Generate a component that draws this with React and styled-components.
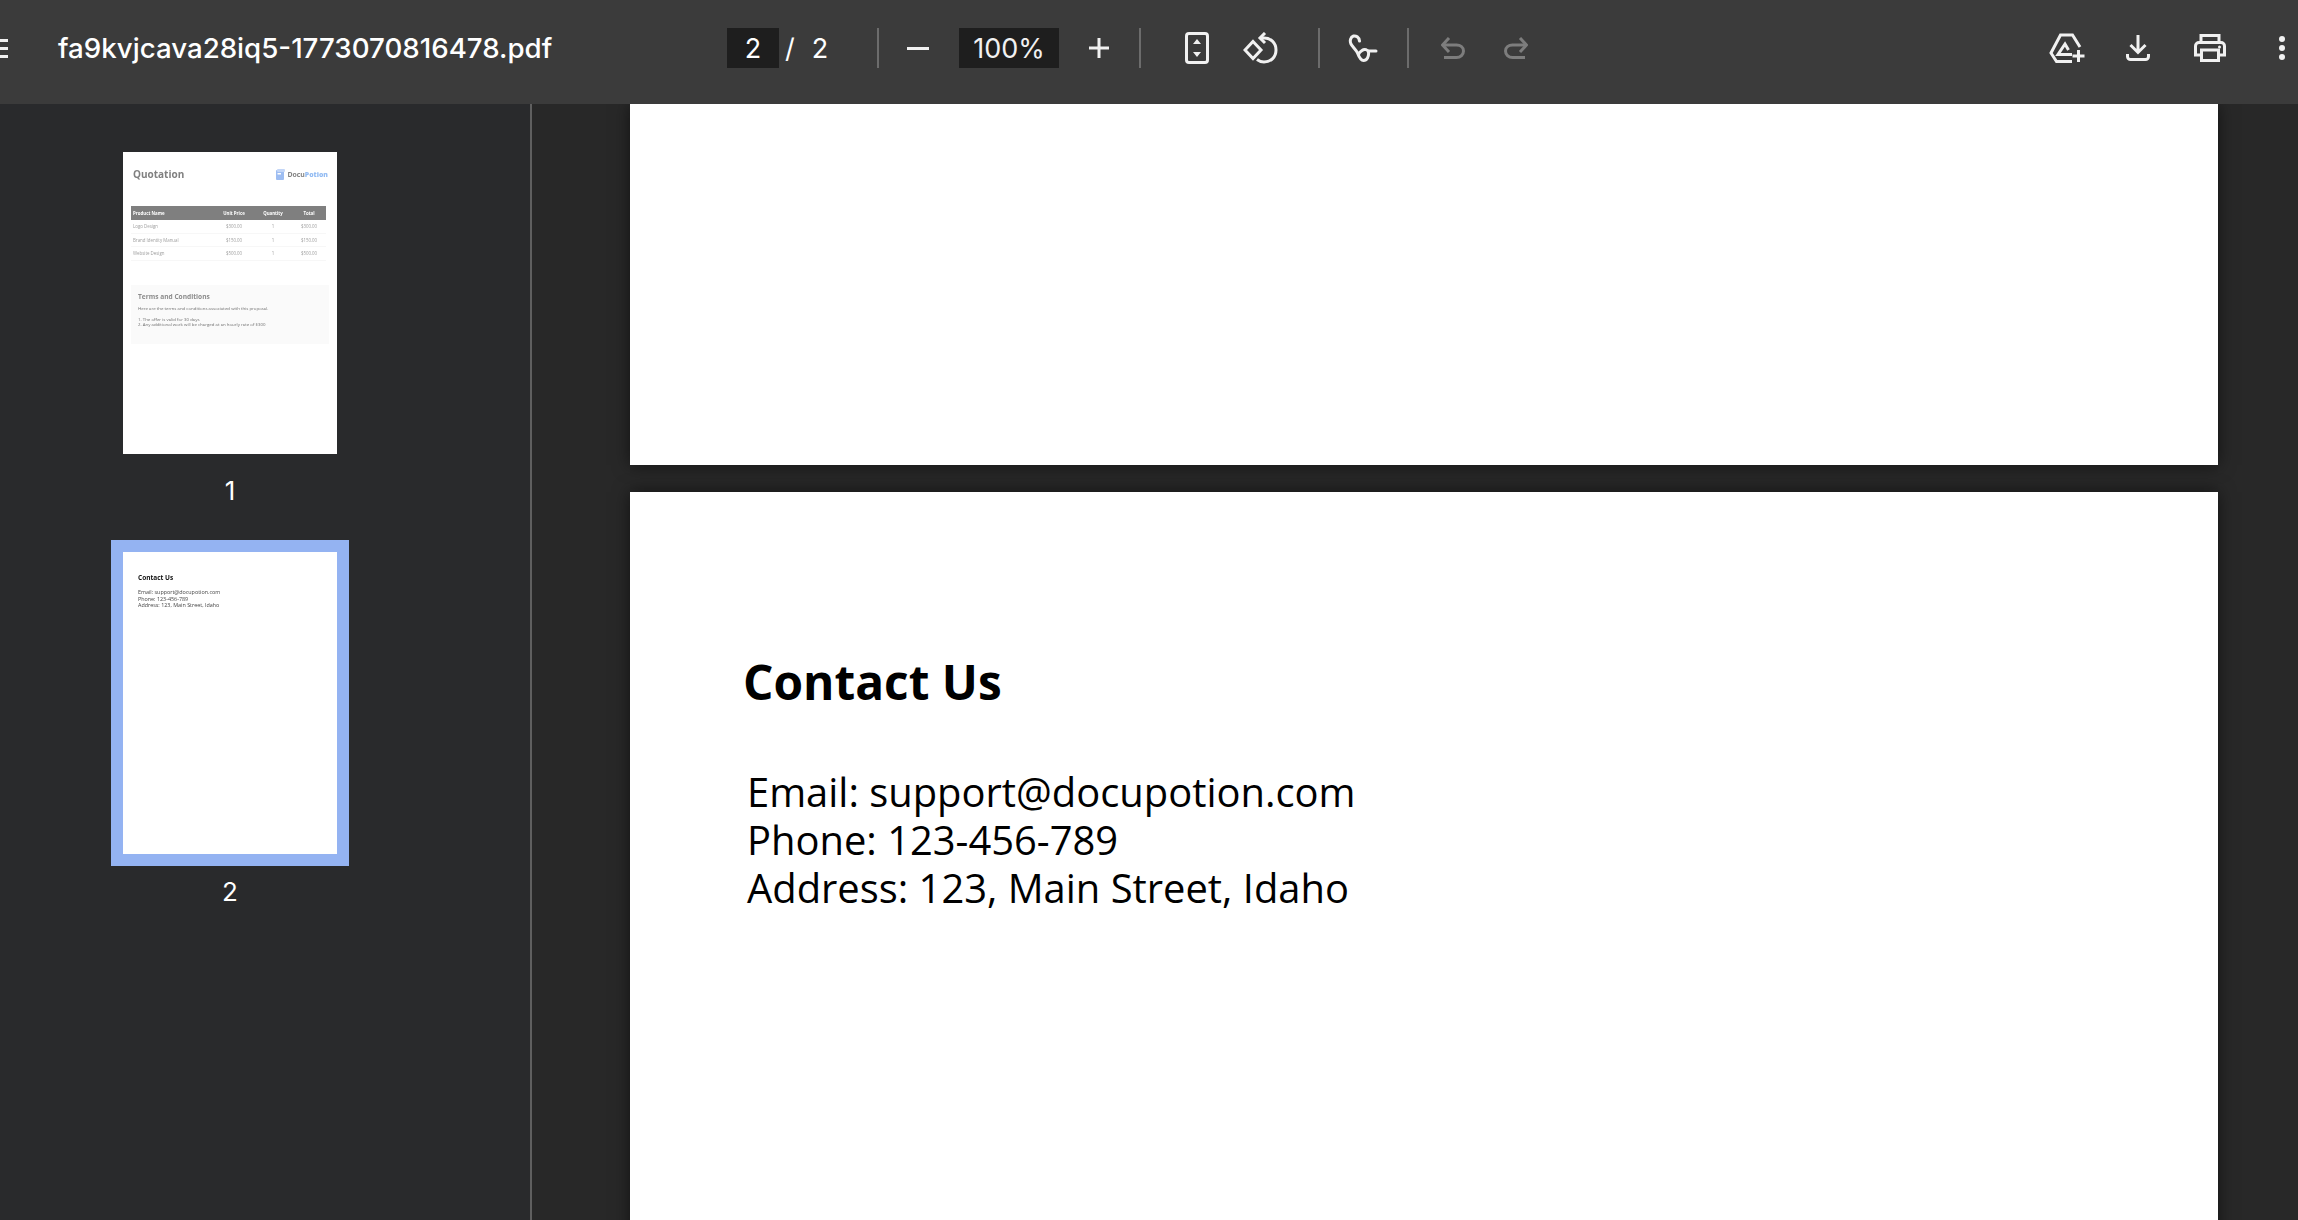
import React from 'react';
import styled, { createGlobalStyle } from 'styled-components';

const GlobalStyle = createGlobalStyle`
  html, body {
    margin: 0;
    height: 100%;
    overflow: hidden;
    background: #282828;
  }
  body {
    font-family: Inter, Roboto, "Liberation Sans", sans-serif;
  }
`;

const Viewer = styled.div`
  width: 2298px;
  height: 1220px;
  display: flex;
  flex-direction: column;
  overflow: hidden;
`;

const Toolbar = styled.header`
  height: 104px;
  flex: none;
  display: flex;
  align-items: center;
  padding-bottom: 8px;
  box-sizing: border-box;
  background: #3b3b3b;
  color: #fff;
  position: relative;
  z-index: 2;
`;

const MenuLines = styled.span`
  width: 8px;
  height: 19px;
  flex: none;
  margin-right: 50px;
  border-top: 3px solid #f1f1f1;
  border-bottom: 3px solid #f1f1f1;
  box-sizing: border-box;
  display: flex;
  align-items: center;
  &::before {
    content: '';
    width: 100%;
    height: 3px;
    background: #f1f1f1;
  }
`;

const Title = styled.div`
  width: 669px;
  flex: none;
  font-size: 27.7px;
  font-weight: 500;
  white-space: nowrap;
`;

const Field = styled.div`
  height: 40px;
  width: ${p => p.$width}px;
  flex: none;
  display: flex;
  align-items: center;
  justify-content: center;
  background: #1e1e1e;
  font-size: 27px;
`;

const PageCount = styled.div`
  width: 98px;
  flex: none;
  display: flex;
  align-items: center;
  font-size: 27px;
  padding-left: 6px;
  box-sizing: border-box;
  gap: 17px;
`;

const Divider = styled.span`
  width: 2px;
  height: 40px;
  flex: none;
  background: #6c6c6c;
  margin-left: ${p => p.$left || 0}px;
`;

const IconSlot = styled.span`
  flex: none;
  display: flex;
  margin-left: ${p => p.$left}px;
  color: ${p => (p.$dim ? '#7d7d7d' : '#f1f1f1')};
  svg {
    display: block;
  }
`;

const Body = styled.div`
  flex: 1;
  display: flex;
  min-height: 0;
`;

const Sidebar = styled.aside`
  width: 532px;
  flex: none;
  display: flex;
  flex-direction: column;
  align-items: center;
  padding-top: 36px;
  padding-right: 70px;
  box-sizing: border-box;
  background: #292a2c;
  border-right: 2px solid #5f5f5f;
`;

const ThumbFrame = styled.div`
  padding: 12px;
  background: ${p => (p.$active ? '#94b3f2' : 'transparent')};
`;

const ThumbPage = styled.div`
  width: 214px;
  height: 302px;
  box-sizing: border-box;
  background: #fff;
  font-family: "Open Sans", sans-serif;
  filter: blur(0.35px);
`;

const ThumbLabel = styled.div`
  color: #fff;
  font-size: 26px;
  line-height: 30px;
  margin-top: ${p => p.$top}px;
  margin-bottom: ${p => p.$bottom || 0}px;
  text-align: center;
`;

const QuoteHead = styled.div`
  display: flex;
  align-items: center;
  justify-content: space-between;
  padding: 2px 9px 0 10px;
  height: 42px;
  box-sizing: border-box;
`;

const QuoteTitle = styled.div`
  font-size: 10px;
  font-weight: 700;
  color: #808080;
`;

const Brand = styled.div`
  display: flex;
  align-items: center;
  gap: 2px;
  font-size: 6.9px;
  font-weight: 700;
  color: #808080;
  b {
    color: #93bcf3;
  }
`;

const Table = styled.div`
  margin: 12px 11px 0 8px;
`;

const Row = styled.div`
  display: grid;
  grid-template-columns: 83px 40px 38px 1fr;
  height: ${p => (p.$head ? 14 : 13.5)}px;
  box-sizing: border-box;
  align-items: center;
  font-size: 4.4px;
  color: ${p => (p.$head ? '#fff' : '#a0a0a0')};
  font-weight: ${p => (p.$head ? 700 : 400)};
  background: ${p => (p.$head ? '#7f7f7f' : 'transparent')};
  border-bottom: ${p => (p.$head ? '0' : '1px solid #f7f7f7')};
  span {
    text-align: center;
  }
  span:first-child {
    text-align: left;
    padding-left: 2px;
  }
`;

const Terms = styled.div`
  margin: 24.5px 8px 0;
  height: 59px;
  box-sizing: border-box;
  padding: 8px 7px 0;
  background: #fafafa;
  color: #6f6f6f;
  font-size: 4.35px;
  line-height: 5px;
  h4 {
    margin: 0 0 5px;
    font-size: 6.6px;
    line-height: 8px;
    font-weight: 700;
    color: #8c8c8c;
  }
  p {
    margin: 0 0 6px;
  }
`;

const MiniContact = styled.div`
  padding: 22px 15px 0;
  color: #444;
  font-size: 5.4px;
  line-height: 6.5px;
  h4 {
    margin: 0 0 7px;
    font-size: 6.5px;
    line-height: 8px;
    font-weight: 700;
    color: #111;
  }
`;

const Main = styled.main`
  flex: 1;
  min-width: 0;
  background: #282828;
  padding-left: 98px;
  overflow: hidden;
`;

const Sheet = styled.section`
  width: 1588px;
  background: #fff;
  box-shadow: 0 0 16px rgba(0, 0, 0, 0.55);
  height: ${p => p.$height}px;
  margin-bottom: 27px;
  box-sizing: border-box;
`;

const ContactBlock = styled.div`
  padding: 159px 0 0 113px;
  font-family: "Open Sans", sans-serif;
  color: #000;
`;

const ContactTitle = styled.h2`
  margin: 0 0 55px;
  font-size: 47.8px;
  line-height: 62px;
  font-weight: 700;
`;

const ContactLine = styled.div`
  font-size: 39.9px;
  line-height: 48px;
  margin-left: 4px;
`;

const products = [
  ['Logo Design', '$300.00', '1', '$300.00'],
  ['Brand Identity Manual', '$150.00', '1', '$150.00'],
  ['Website Design', '$500.00', '1', '$500.00'],
];

function FitIcon() {
  return (
    <svg width="24" height="32" viewBox="0 0 24 32" fill="none">
      <rect x="1.500" y="1.500" width="21" height="29" rx="2.500" stroke="currentColor" strokeWidth="3" />
      <path d="M12 7l4 5H8zM12 25l-4-5h8z" fill="currentColor" />
    </svg>
  );
}

function RotateIcon() {
  return (
    <svg width="36" height="33" viewBox="0 0 36 33" fill="none" stroke="currentColor" strokeWidth="3">
      <path d="M10 9.500L18 18L10 26.500L2 18Z" />
      <path d="M17 6h4c7 0 12 5 12 12s-5 12-12 12c-3 0-5-1-7-2.500" />
      <path d="M22 1l-5 5 5 5" />
    </svg>
  );
}

function DrawIcon() {
  return (
    <svg width="30" height="29" viewBox="0 0 30 29" fill="none" stroke="currentColor" strokeWidth="3" strokeLinecap="round">
      <path d="M11.500 7C11 3 8 1.500 5.500 2 2.500 3 1.500 7 3 10c1.500 3 5 5.500 6.500 9 1.500 4 3 7.500 6 7.500 3.500 0 5.500-4 5-8-.5-3-4-4-6.500-2-1.500 1-3 2.500-3.500 4" />
      <path d="M20.500 17h7.500" />
    </svg>
  );
}

function UndoIcon() {
  return (
    <svg width="24" height="22" viewBox="0 0 24 22" fill="none" stroke="currentColor" strokeWidth="3">
      <path d="M8 1L1.500 8 8 15" />
      <path d="M2 8h13.500c4 0 7 2.500 7 6s-3 6.500-7 6.500H3" />
    </svg>
  );
}

function RedoIcon() {
  return (
    <svg width="24" height="22" viewBox="0 0 24 22" fill="none" stroke="currentColor" strokeWidth="3">
      <path d="M16 1l6.500 7L16 15" />
      <path d="M22 8H8.500c-4 0-7 2.500-7 6s3 6.500 7 6.500H21" />
    </svg>
  );
}

function DriveIcon() {
  return (
    <svg width="36" height="30" viewBox="0 0 36 30" fill="none" stroke="currentColor" strokeWidth="3">
      <path d="M31 14L23.500 2H11.500L2 20l5.500 8.500H23" />
      <path d="M23 21.500H9L16 11l3.500 6" />
      <path d="M29.500 17v12M23.500 23h12" />
    </svg>
  );
}

function DownloadIcon() {
  return (
    <svg width="24" height="26" viewBox="0 0 24 26" fill="none" stroke="currentColor" strokeWidth="3">
      <path d="M12 0v17M4.500 10l7.500 7.500 7.500-7.500" />
      <path d="M1.500 19v2.500a3 3 0 003 3h15a3 3 0 003-3V19" />
    </svg>
  );
}

function PrintIcon() {
  return (
    <svg width="32" height="28" viewBox="0 0 32 28" fill="none" stroke="currentColor" strokeWidth="3">
      <path d="M7 9V1.500h18V9" />
      <path d="M7 21H1.500v-9a3.500 3.500 0 013.500-3.500h22a3.500 3.500 0 013.500 3.500v9H25" />
      <rect x="7.500" y="16" width="17" height="10.500" />
      <circle cx="25.500" cy="13" r="1.500" fill="currentColor" stroke="none" />
    </svg>
  );
}

function DotsIcon() {
  return (
    <svg width="6" height="24" viewBox="0 0 6 24" fill="currentColor">
      <circle cx="3" cy="3" r="3" />
      <circle cx="3" cy="12" r="3" />
      <circle cx="3" cy="21" r="3" />
    </svg>
  );
}

function BrandMark() {
  return (
    <svg width="9" height="11" viewBox="0 0 9 11">
      <rect x="0" y="1" width="8" height="10" rx="1" fill="#9dbdf2" />
      <rect x="1" y="0" width="8" height="3" rx="1" fill="#c3d6f7" />
      <rect x="1.500" y="4" width="3.500" height="1.500" fill="#fff" />
    </svg>
  );
}

export default function App() {
  return (
    <Viewer>
      <GlobalStyle />
      <Toolbar>
        <MenuLines />
        <Title>fa9kvjcava28iq5-1773070816478.pdf</Title>
        <Field $width={52}>2</Field>
        <PageCount>
          <span>/</span>
          <span>2</span>
        </PageCount>
        <Divider />
        <IconSlot $left={28}>
          <svg width="22" height="3" viewBox="0 0 22 3"><rect width="22" height="3" fill="currentColor" /></svg>
        </IconSlot>
        <IconSlot $left={30}>
          <Field $width={100}>100%</Field>
        </IconSlot>
        <IconSlot $left={30}>
          <svg width="20" height="20" viewBox="0 0 20 20"><path d="M8.500 0h3v8.500H20v3h-8.500V20h-3v-8.500H0v-3h8.500z" fill="currentColor" /></svg>
        </IconSlot>
        <Divider $left={30} />
        <IconSlot $left={44}><FitIcon /></IconSlot>
        <IconSlot $left={34}><RotateIcon /></IconSlot>
        <Divider $left={39} />
        <IconSlot $left={28}><DrawIcon /></IconSlot>
        <Divider $left={29} />
        <IconSlot $left={32} $dim><UndoIcon /></IconSlot>
        <IconSlot $left={39} $dim><RedoIcon /></IconSlot>
        <IconSlot $left={521}><DriveIcon /></IconSlot>
        <IconSlot $left={41}><DownloadIcon /></IconSlot>
        <IconSlot $left={44}><PrintIcon /></IconSlot>
        <IconSlot $left={53}><DotsIcon /></IconSlot>
      </Toolbar>
      <Body>
        <Sidebar>
          <ThumbFrame>
            <ThumbPage>
              <QuoteHead>
                <QuoteTitle>Quotation</QuoteTitle>
                <Brand>
                  <BrandMark />
                  <span>Docu<b>Potion</b></span>
                </Brand>
              </QuoteHead>
              <Table>
                <Row $head>
                  <span>Product Name</span>
                  <span>Unit Price</span>
                  <span>Quantity</span>
                  <span>Total</span>
                </Row>
                {products.map(p => (
                  <Row key={p[0]}>
                    {p.map((cell, i) => <span key={i}>{cell}</span>)}
                  </Row>
                ))}
              </Table>
              <Terms>
                <h4>Terms and Conditions</h4>
                <p>Here are the terms and conditions associated with this proposal.</p>
                <div>1. The offer is valid for 30 days</div>
                <div>2. Any additional work will be charged at an hourly rate of $300</div>
              </Terms>
            </ThumbPage>
          </ThumbFrame>
          <ThumbLabel $top={10} $bottom={34}>1</ThumbLabel>
          <ThumbFrame $active>
            <ThumbPage>
              <MiniContact>
                <h4>Contact Us</h4>
                <div>Email: support@docupotion.com</div>
                <div>Phone: 123-456-789</div>
                <div>Address: 123, Main Street, Idaho</div>
              </MiniContact>
            </ThumbPage>
          </ThumbFrame>
          <ThumbLabel $top={11}>2</ThumbLabel>
        </Sidebar>
        <Main>
          <Sheet $height={361} />
          <Sheet $height={900}>
            <ContactBlock>
              <ContactTitle>Contact Us</ContactTitle>
              <ContactLine>Email: support@docupotion.com</ContactLine>
              <ContactLine>Phone: 123-456-789</ContactLine>
              <ContactLine>Address: 123, Main Street, Idaho</ContactLine>
            </ContactBlock>
          </Sheet>
        </Main>
      </Body>
    </Viewer>
  );
}
